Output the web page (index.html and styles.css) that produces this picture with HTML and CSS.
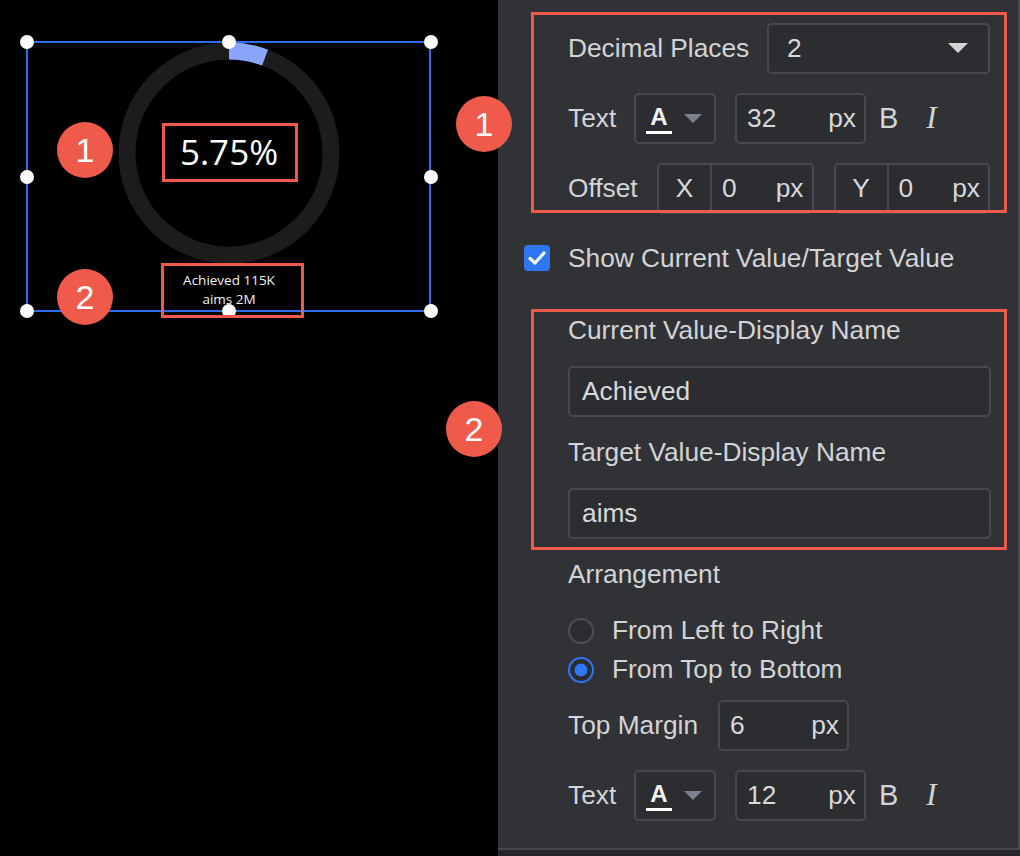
FILE: index.html
```html
<!DOCTYPE html>
<html lang="en">
<head>
  <meta charset="UTF-8">
  <meta name="viewport" content="width=device-width, initial-scale=1.0">
  <title>Progress Ring Settings</title>
  <link rel="stylesheet" href="styles.css">
</head>
<body>
  <div class="app">
    <div class="canvas">
      <div class="widget">
        <span class="handle h-tl"></span>
        <span class="handle h-tc"></span>
        <span class="handle h-tr"></span>
        <span class="handle h-ml"></span>
        <span class="handle h-mr"></span>
        <span class="handle h-bl"></span>
        <span class="handle h-bc"></span>
        <span class="handle h-br"></span>
      </div>
      <svg class="ring" width="222" height="222" viewBox="0 0 222 222">
        <circle cx="111" cy="111" r="102" fill="none" stroke="#1c1c1c" stroke-width="17"/>
        <path d="M111 9 A102 102 0 0 1 147.05 15.58" fill="none" stroke="#8aa6fb" stroke-width="17"/>
      </svg>
      <div class="value">5.75%</div>
      <div class="caption">Achieved 115K<br>aims 2M</div>
      <div class="mark mark-value"></div>
      <div class="mark mark-caption"></div>
    </div>

    <div class="panel">
      <div class="row">
        <span class="label w-decimal">Decimal Places</span>
        <div class="box select">
          <span>2</span>
          <span class="caret caret-light"></span>
        </div>
      </div>

      <div class="row">
        <span class="label w-text">Text</span>
        <div class="box color-btn">
          <span class="swatch">A</span>
          <span class="caret caret-grey"></span>
        </div>
        <div class="box num"><span>32</span><span>px</span></div>
        <span class="fmt fmt-b">B</span>
        <span class="fmt fmt-i">I</span>
      </div>

      <div class="row">
        <span class="label w-offset">Offset</span>
        <div class="offset">
          <div class="box pair"><span class="axis">X</span><span class="pair-val">0</span><span>px</span></div>
          <div class="box pair"><span class="axis">Y</span><span class="pair-val">0</span><span>px</span></div>
        </div>
      </div>

      <div class="row">
        <span class="check">
          <svg width="18" height="16" viewBox="0 0 18 16"><path d="M2 8.5 L7 13 L16 3" fill="none" stroke="#fff" stroke-width="3.2" stroke-linecap="round" stroke-linejoin="round"/></svg>
        </span>
        <span class="label">Show Current Value/Target Value</span>
      </div>

      <div class="line-row gap-top">
        <span class="label">Current Value-Display Name</span>
      </div>
      <div class="line-row">
        <div class="box text-input">Achieved</div>
      </div>
      <div class="line-row">
        <span class="label">Target Value-Display Name</span>
      </div>
      <div class="line-row">
        <div class="box text-input">aims</div>
      </div>
      <div class="line-row">
        <span class="label">Arrangement</span>
      </div>

      <div class="radio-row radio-first">
        <span class="radio"></span>
        <span class="label">From Left to Right</span>
      </div>
      <div class="radio-row">
        <span class="radio on"></span>
        <span class="label">From Top to Bottom</span>
      </div>

      <div class="row row-after-radio">
        <span class="label w-margin">Top Margin</span>
        <div class="box num"><span>6</span><span>px</span></div>
      </div>

      <div class="row">
        <span class="label w-text">Text</span>
        <div class="box color-btn">
          <span class="swatch">A</span>
          <span class="caret caret-grey"></span>
        </div>
        <div class="box num"><span>12</span><span>px</span></div>
        <span class="fmt fmt-b">B</span>
        <span class="fmt fmt-i">I</span>
      </div>

      <div class="mark mark-group1"></div>
      <div class="mark mark-group2"></div>
    </div>

    <span class="badge badge-l1">1</span>
    <span class="badge badge-l2">2</span>
    <span class="badge badge-r1">1</span>
    <span class="badge badge-r2">2</span>
  </div>
</body>
</html>
```

FILE: styles.css
```css
body {
  margin: 0;
  font-family: "Liberation Sans", Arial, sans-serif;
  background: #25272b;
}

.app {
  position: relative;
  display: flex;
  align-items: flex-start;
  width: 1020px;
  height: 856px;
  overflow: hidden;
  background: #25272b;
}

/* left: canvas with the selected ring widget */
.canvas {
  position: relative;
  width: 498px;
  height: 856px;
  background: #000;
  flex: none;
}

.widget {
  position: absolute;
  left: 26px;
  top: 41px;
  width: 405px;
  height: 271px;
  box-sizing: border-box;
  border: 2px solid #2f6cf5;
}

.ring {
  position: absolute;
  left: 118px;
  top: 42px;
}

.handle {
  position: absolute;
  width: 14px;
  height: 14px;
  margin: -7px 0 0 -7px;
  border-radius: 50%;
  background: #fff;
  z-index: 2;
}
.h-tl { left: -1px; top: -1px; }
.h-tc { left: 201px; top: -1px; }
.h-tr { left: 403px; top: -1px; }
.h-ml { left: -1px; top: 134px; }
.h-mr { left: 403px; top: 134px; }
.h-bl { left: -1px; top: 268px; }
.h-bc { left: 201px; top: 268px; }
.h-br { left: 403px; top: 268px; }

.value {
  position: absolute;
  left: 129px;
  top: 132px;
  width: 200px;
  line-height: 40px;
  text-align: center;
  font-family: "Open Sans", sans-serif;
  font-size: 35px;
  color: #fff;
}

.caption {
  position: absolute;
  left: 129px;
  top: 271px;
  width: 200px;
  line-height: 19px;
  text-align: center;
  font-family: "Open Sans", sans-serif;
  font-size: 13.5px;
  color: #f2f2f2;
  z-index: 3;
}

/* red annotation frames */
.mark {
  position: absolute;
  box-sizing: border-box;
  border: 3px solid #ef5a4a;
  z-index: 4;
}
.mark-value { left: 162px; top: 123px; width: 136px; height: 59px; }
.mark-caption { left: 161px; top: 263px; width: 143px; height: 55px; }
.mark-group1 { left: 33px; top: 12px; width: 476px; height: 201px; }
.mark-group2 { left: 33px; top: 309px; width: 476px; height: 241px; }

.badge {
  position: absolute;
  width: 56px;
  height: 56px;
  border-radius: 50%;
  background: #ef5a4a;
  color: #fff;
  font-size: 34px;
  line-height: 56px;
  text-align: center;
  z-index: 5;
}
.badge-l1 { left: 57px; top: 122px; }
.badge-l2 { left: 57px; top: 269px; }
.badge-r1 { left: 456px; top: 96px; }
.badge-r2 { left: 446px; top: 401px; }

/* right: settings panel */
.panel {
  position: relative;
  width: 522px;
  height: 850px;
  box-sizing: border-box;
  padding: 13px 28px 0 70px;
  background: #303236;
  border-right: 2px solid #4b4d53;
  border-bottom: 2px solid #47494e;
  color: #d3d4d6;
  font-size: 26.3px;
}

.row {
  display: flex;
  align-items: center;
  gap: 18px;
  height: 70px;
}

.line-row {
  display: flex;
  align-items: center;
  height: 61px;
}
.gap-top { margin-top: 7px; }

.radio-row {
  display: flex;
  align-items: center;
  gap: 18px;
  height: 39px;
}
.radio-first { margin-top: 6px; }
.row-after-radio { margin-top: 1px; }

.label {
  flex: none;
  white-space: nowrap;
}
.w-decimal { width: 181px; }
.w-text { width: 48px; }
.w-offset { width: 71px; }
.w-margin { width: 131px; }

.box {
  display: flex;
  align-items: center;
  box-sizing: border-box;
  height: 51px;
  border: 2px solid #47494e;
  border-radius: 5px;
  background: #2b2d31;
  color: #d8d9db;
}

.select {
  flex: 1;
  justify-content: space-between;
  padding: 0 20px 0 18px;
}

.caret {
  width: 0;
  height: 0;
  border-left: 10px solid transparent;
  border-right: 10px solid transparent;
}
.caret-light { border-top: 10px solid #d4d4d4; }
.caret-grey { border-top: 9px solid #7c8190; border-left-width: 9px; border-right-width: 9px; }

.color-btn {
  width: 82px;
  padding: 0 12px 0 10px;
  justify-content: space-between;
}

.swatch {
  width: 26px;
  text-align: center;
  font-size: 24px;
  font-weight: bold;
  line-height: 22px;
  color: #f4f4f4;
  padding-bottom: 3px;
  border-bottom: 3px solid #fff;
  margin-top: 4px;
}

.num {
  width: 131px;
  margin-left: 1px;
  justify-content: space-between;
  padding: 0 8px 0 10px;
}

.fmt {
  color: #d3d4d6;
}
.fmt-b {
  margin-left: -5px;
  font-size: 29px;
}
.fmt-i {
  margin-left: 10px;
  font-family: "Liberation Serif", serif;
  font-style: italic;
  font-size: 31px;
}

.offset {
  flex: 1;
  display: flex;
  gap: 20px;
}

.pair {
  flex: 1;
  padding-right: 8px;
}
.axis {
  width: 51px;
  height: 100%;
  display: flex;
  align-items: center;
  justify-content: center;
  border-right: 2px solid #47494e;
}
.pair-val {
  flex: 1;
  padding-left: 10px;
}

.check {
  width: 26px;
  height: 26px;
  margin-left: -44px;
  border-radius: 4px;
  background: #2f76f5;
  display: flex;
  align-items: center;
  justify-content: center;
  flex: none;
}

.text-input {
  flex: 1;
  padding-left: 12px;
  margin-right: -1px;
}

.radio {
  flex: none;
  width: 26px;
  height: 26px;
  box-sizing: border-box;
  border-radius: 50%;
  border: 2px solid #4d4f55;
  background: #2a2c30;
}
.radio.on {
  border-color: #2f76f5;
  background: radial-gradient(circle, #2f76f5 0 6px, #2a2c30 6.8px);
}
```
